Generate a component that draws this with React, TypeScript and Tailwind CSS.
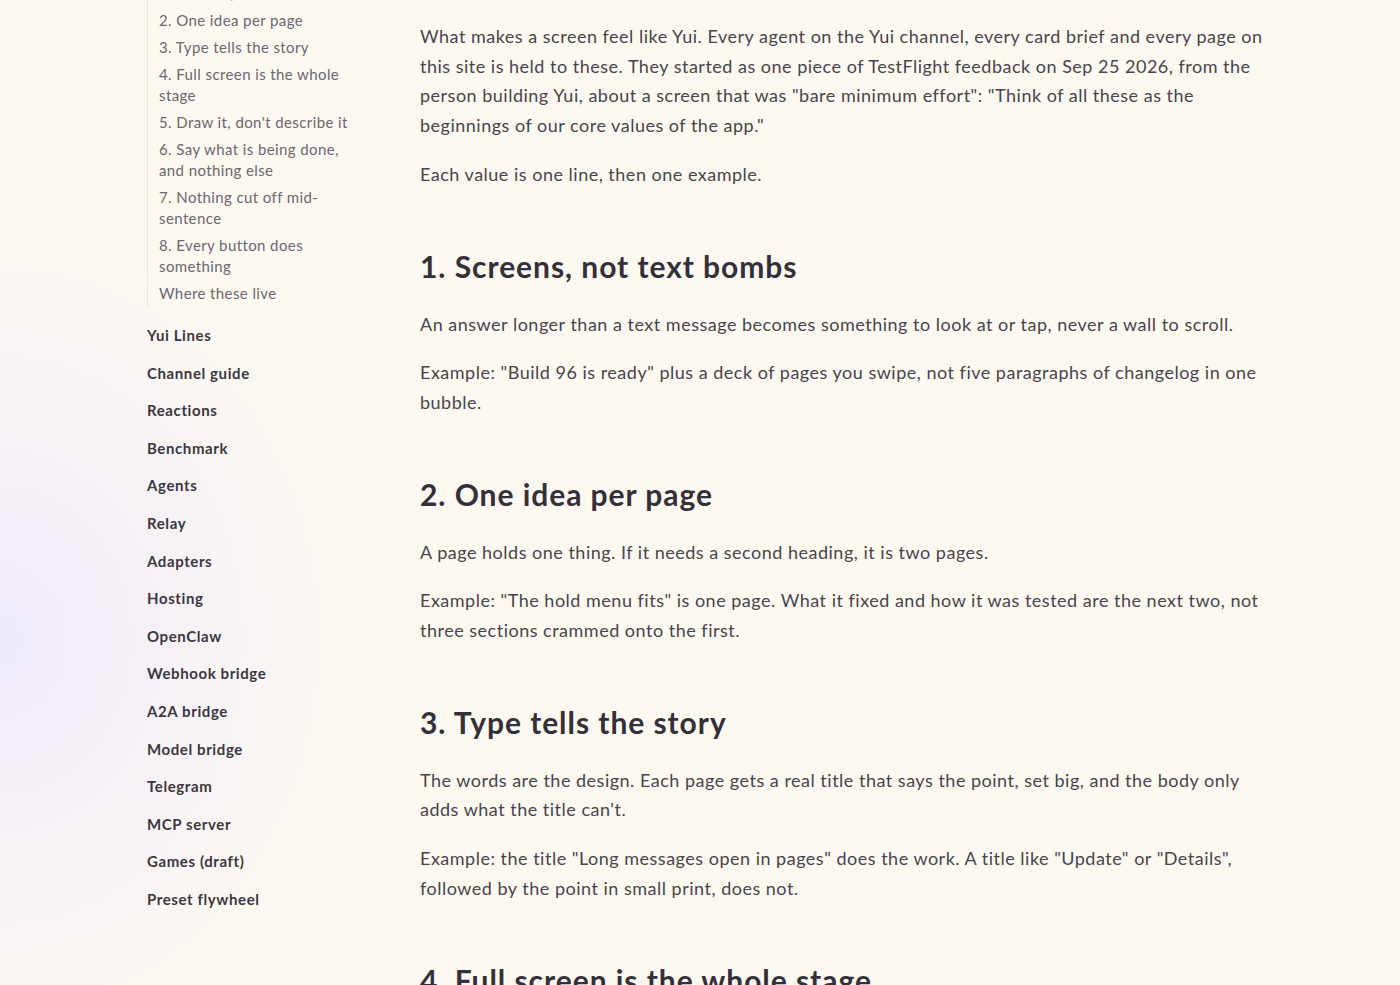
import React from "react";

const nested = [
  "1. Screens, not text bombs",
  "2. One idea per page",
  "3. Type tells the story",
  "4. Full screen is the whole stage",
  "5. Draw it, don't describe it",
  "6. Say what is being done, and nothing else",
  "7. Nothing cut off mid-sentence",
  "8. Every button does something",
  "Where these live",
];

const links = [
  "Yui Lines",
  "Channel guide",
  "Reactions",
  "Benchmark",
  "Agents",
  "Relay",
  "Adapters",
  "Hosting",
  "OpenClaw",
  "Webhook bridge",
  "A2A bridge",
  "Model bridge",
  "Telegram",
  "MCP server",
  "Games (draft)",
  "Preset flywheel",
];

const sections: { title: string; paras: string[] }[] = [
  {
    title: "1. Screens, not text bombs",
    paras: [
      "An answer longer than a text message becomes something to look at or tap, never a wall to scroll.",
      'Example: "Build 96 is ready" plus a deck of pages you swipe, not five paragraphs of changelog in one bubble.',
    ],
  },
  {
    title: "2. One idea per page",
    paras: [
      "A page holds one thing. If it needs a second heading, it is two pages.",
      'Example: "The hold menu fits" is one page. What it fixed and how it was tested are the next two, not three sections crammed onto the first.',
    ],
  },
  {
    title: "3. Type tells the story",
    paras: [
      "The words are the design. Each page gets a real title that says the point, set big, and the body only adds what the title can't.",
      'Example: the title "Long messages open in pages" does the work. A title like "Update" or "Details", followed by the point in small print, does not.',
    ],
  },
  {
    title: "4. Full screen is the whole stage",
    paras: [
      "When something opens full screen, it owns the screen. Nothing from the chat peeks through behind it.",
    ],
  },
];

export default function App() {
  return (
    <div
      className="h-[985px] overflow-hidden bg-[#fdf9f1] bg-[radial-gradient(ellipse_360px_420px_at_0px_640px,#eee9f8_0%,#f6f1f6_45%,rgba(253,249,241,0)_100%)] text-[#48444d]"
      style={{ fontFamily: "Lato, 'Noto Sans', sans-serif" }}
    >
      <div className="flex pl-[147px]">
        <nav className="w-[205px] shrink-0 -mt-[20px]">
          <ul className="border-l border-[#ebe6e0] pl-[11px] mb-[10px]">
            {nested.map((t) => (
              <li
                key={t}
                className="py-[3px] text-[15px] leading-[21px] text-[#6b6670] tracking-[0.4px]"
              >
                {t}
              </li>
            ))}
          </ul>
          <ul>
            {links.map((t) => (
              <li
                key={t}
                className="py-[8px] text-[15px] leading-[21.6px] font-bold text-[#3b3740] tracking-[0.6px]"
              >
                {t}
              </li>
            ))}
          </ul>
        </nav>
        <main className="ml-[68px] w-[848px] pt-[22px] text-[18px] leading-[29.7px] tracking-[0.5px]">
          <p className="mb-[19px]">
            What makes a screen feel like Yui. Every agent on the Yui channel, every card brief and
            every page on this site is held to these. They started as one piece of TestFlight
            feedback on Sep 25 2026, from the person building Yui, about a screen that was "bare
            minimum effort": "Think of all these as the beginnings of our core values of the app."
          </p>
          <p className="mb-[19px]">Each value is one line, then one example.</p>
          {sections.map((s) => (
            <section key={s.title}>
              <h2 className="mt-[57px] mb-[24px] text-[30px] leading-[39px] font-bold text-[#34303a] tracking-[0.95px]">
                {s.title}
              </h2>
              {s.paras.map((p) => (
                <p key={p} className="mb-[19px]">
                  {p}
                </p>
              ))}
            </section>
          ))}
        </main>
      </div>
    </div>
  );
}
